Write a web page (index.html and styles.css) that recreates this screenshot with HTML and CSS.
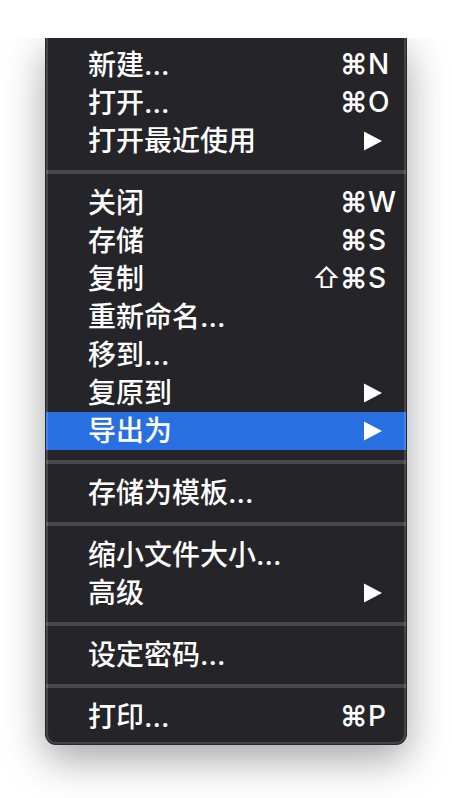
FILE: index.html
```html
<!DOCTYPE html>
<html lang="zh-CN">
<head>
<meta charset="utf-8">
<meta name="viewport" content="width=device-width, initial-scale=1">
<title>文件</title>
<link rel="stylesheet" href="styles.css">
</head>
<body>
<main class="stage">
  <div class="menu" role="menu">
    <div class="group">
      <button class="item" type="button" role="menuitem"><span>新建...</span><span class="keys"><kbd class="mod">⌘</kbd><kbd>N</kbd></span></button>
      <button class="item" type="button" role="menuitem"><span>打开...</span><span class="keys"><kbd class="mod">⌘</kbd><kbd>O</kbd></span></button>
      <button class="item" type="button" role="menuitem" aria-haspopup="menu"><span>打开最近使用</span><svg class="arrow" viewBox="0 0 18 20" aria-hidden="true"><path d="M0 0.500L18 10L0 19.500Z"/></svg></button>
    </div>
    <div class="group">
      <button class="item" type="button" role="menuitem"><span>关闭</span><span class="keys"><kbd class="mod">⌘</kbd><kbd>W</kbd></span></button>
      <button class="item" type="button" role="menuitem"><span>存储</span><span class="keys"><kbd class="mod">⌘</kbd><kbd>S</kbd></span></button>
      <button class="item" type="button" role="menuitem"><span>复制</span><span class="keys"><kbd class="shift">⇧</kbd><kbd class="mod">⌘</kbd><kbd>S</kbd></span></button>
      <button class="item" type="button" role="menuitem"><span>重新命名...</span></button>
      <button class="item" type="button" role="menuitem"><span>移到...</span></button>
      <button class="item" type="button" role="menuitem" aria-haspopup="menu"><span>复原到</span><svg class="arrow" viewBox="0 0 18 20" aria-hidden="true"><path d="M0 0.500L18 10L0 19.500Z"/></svg></button>
      <button class="item selected" type="button" role="menuitem" aria-haspopup="menu"><span>导出为</span><svg class="arrow" viewBox="0 0 18 20" aria-hidden="true"><path d="M0 0.500L18 10L0 19.500Z"/></svg></button>
    </div>
    <div class="group">
      <button class="item" type="button" role="menuitem"><span>存储为模板...</span></button>
    </div>
    <div class="group">
      <button class="item" type="button" role="menuitem"><span>缩小文件大小...</span></button>
      <button class="item" type="button" role="menuitem" aria-haspopup="menu"><span>高级</span><svg class="arrow" viewBox="0 0 18 20" aria-hidden="true"><path d="M0 0.500L18 10L0 19.500Z"/></svg></button>
    </div>
    <div class="group">
      <button class="item" type="button" role="menuitem"><span>设定密码...</span></button>
    </div>
    <div class="group">
      <button class="item" type="button" role="menuitem"><span>打印...</span><span class="keys"><kbd class="mod">⌘</kbd><kbd>P</kbd></span></button>
    </div>
  </div>
</main>
</body>
</html>
```
FILE: styles.css
```css
* {
  box-sizing: border-box;
}

body {
  margin: 0;
  background: #fff;
}

/* The stage cuts the shadow off level with the top of the menu. */
.stage {
  margin-top: 38px;
  padding: 0 45px 53px;
  overflow: hidden;
}

.menu {
  position: relative;
  padding: 8px 0;
  border: 1px solid #29292c;
  border-top: 0;
  border-radius: 0 0 11px 11px;
  background: #252429;
  box-shadow: 0 14px 40px rgba(0, 0, 0, 0.36);
}

/* Light inner rim, drawn over the rows and the separators. */
.menu::after {
  content: "";
  position: absolute;
  inset: 0;
  border: 2px solid rgba(255, 255, 255, 0.15);
  border-top: 0;
  border-radius: 0 0 10px 10px;
  pointer-events: none;
}

.group + .group {
  margin-top: 10px;
  padding-top: 10px;
  border-top: 4px solid #48474b;
}

.item {
  display: flex;
  align-items: center;
  justify-content: space-between;
  width: 100%;
  height: 38px;
  margin: 0;
  padding: 0 24px 0 42px;
  border: 0;
  background: transparent;
  color: #fff;
  font: 500 28px/36px Inter, "Noto Sans CJK SC", sans-serif;
  text-align: left;
  white-space: nowrap;
}

.selected {
  background: #2870e2;
}

.keys {
  display: flex;
  margin-right: -16px;
  padding-bottom: 2px;
}

.keys kbd {
  width: 28px;
  font: inherit;
}

.keys .mod {
  font-weight: 600;
}

.keys .shift {
  font-weight: 400;
}

.keys kbd:last-child {
  width: 30px;
}

.arrow {
  width: 18px;
  height: 20px;
  fill: #fff;
}
```
